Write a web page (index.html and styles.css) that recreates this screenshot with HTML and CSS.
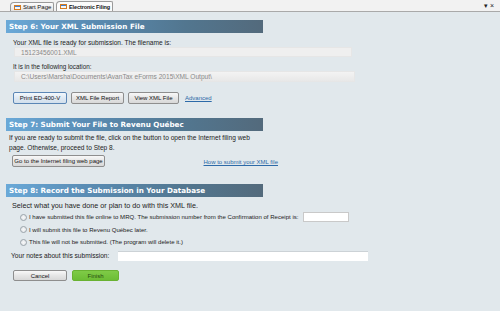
FILE: index.html
```html
<!DOCTYPE html>
<html>
<head>
<meta charset="utf-8">
<link rel="stylesheet" href="styles.css">
</head>
<body>
<div class="tabstrip">
  <div class="tabs">
    <div class="tab inactive"><span class="ticon"></span>Start Page</div>
    <div class="tab active"><span class="ticon"></span>Electronic Filing</div>
  </div>
  <div class="tabctl"><span class="drop">▾</span><span class="close">×</span></div>
</div>
<div class="content">
  <div class="section s6">
    <div class="hdr">Step 6: Your XML Submission File</div>
    <div class="txt t1">Your XML file is ready for submission. The filename is:</div>
    <div class="field f1">15123456001.XML</div>
    <div class="txt t2">It is in the following location:</div>
    <div class="field f2">C:\Users\Marsha\Documents\AvanTax eForms 2015\XML Output\</div>
    <div class="btnrow r1">
      <button class="btn def">Print ED-400-V</button>
      <button class="btn">XML File Report</button>
      <button class="btn">View XML File</button>
      <a class="link">Advanced</a>
    </div>
  </div>
  <div class="section s7">
    <div class="hdr">Step 7: Submit Your File to Revenu Québec</div>
    <div class="txt para">If you are ready to submit the file, click on the button to open the Internet filing web page. Otherwise, proceed to Step 8.</div>
    <div class="btnrow r2">
      <button class="btn wide">Go to the Internet filing web page</button>
      <a class="link howto">How to submit your XML file</a>
    </div>
  </div>
  <div class="section s8">
    <div class="hdr">Step 8: Record the Submission in Your Database</div>
    <div class="txt t3">Select what you have done or plan to do with this XML file.</div>
    <div class="radios">
      <div class="radio rr1"><span class="rb"></span>I have submitted this file online to MRQ. The submission number from the Confirmation of Receipt is:<span class="numbox"></span></div>
      <div class="radio"><span class="rb"></span>I will submit this file to Revenu Québec later.</div>
      <div class="radio"><span class="rb"></span>This file will not be submitted. (The program will delete it.)</div>
    </div>
    <div class="notes"><span>Your notes about this submission:</span><span class="notebox"></span></div>
    <div class="btnrow r3">
      <button class="btn">Cancel</button>
      <button class="btn finish">Finish</button>
    </div>
  </div>
</div>
</body>
</html>
```
FILE: styles.css
```css
html, body { margin: 0; padding: 0; }
body {
  width: 500px; height: 311px; overflow: hidden;
  background: #e1e8ec;
  font-family: "Liberation Sans", Arial, sans-serif;
  font-size: 6.6px; color: #222;
}
.tabstrip {
  height: 11px; background: #f2f2f2; border-bottom: 1px solid #a9a9a9;
  display: flex; justify-content: space-between; align-items: flex-end;
  padding-left: 10px; padding-right: 6px;
}
.tabs { display: flex; align-items: flex-end; gap: 2px; }
.tab {
  height: 9px; display: flex; align-items: center; gap: 2px; white-space: nowrap;
  padding: 0 0 0 3px; font-size: 6px; color: #111; box-sizing: border-box;
  border: 1px solid #9a9a9a; border-bottom: none; overflow: hidden;
  border-radius: 4px 2px 0 0;
}
.tab.inactive { background: linear-gradient(#fdfdfd, #e2e2e2); width: 44px; }
.tab.active { background: #fbfbfb; height: 10px; font-weight: bold; width: 57px; font-size: 5.5px; letter-spacing: -0.1px; }
.ticon {
  width: 7px; height: 5px; display: inline-block; flex: none;
  background: linear-gradient(#3f7fd0 0 35%, #f6f6f6 35% 100%);
  border: 1px solid #d57a1f; box-sizing: border-box;
}
.tabctl { font-size: 7px; color: #222; display: flex; gap: 2px; line-height: 8px; padding-bottom: 1px; }
.content { padding: 8px 0 0 6px; }
.hdr {
  width: 257px; height: 13px; box-sizing: border-box;
  background: linear-gradient(90deg, #6aa9d8 0%, #5a8db5 30%, #52768f 70%, #536a7c 100%);
  color: #fff; font-family: "DejaVu Sans", Verdana, sans-serif; font-weight: bold;
  font-size: 7.2px; line-height: 13px; padding-left: 3px;
}
.txt { padding-left: 7px; line-height: 9px; }
.t1 { margin-top: 5px; }
.field {
  margin-left: 8px; box-sizing: border-box; background: #efefef;
  border: 1px solid #e6e6e6; color: #8a8a8a; padding-left: 6px;
  line-height: 9px; height: 10px;
}
.f1 { width: 338px; }
.t2 { margin-top: 5px; font-size: 6.3px; }
.f2 { width: 341px; height: 11px; line-height: 10px; background: linear-gradient(#f3f3f3, #e8e8e8); }
.btnrow { display: flex; align-items: center; }
.r1 { margin: 10px 0 0 7px; gap: 4px; }
.btn {
  font-family: inherit; font-size: 6px; color: #111;
  height: 12px; padding: 0; margin: 0;
  border: 1px solid #8e8e8e; border-radius: 2px;
  background: linear-gradient(#f8f8f8, #e6e6e6 50%, #d8d8d8);
  width: 54px;
}
.btn.def { border-color: #5b86b5; background: linear-gradient(#f3f8fc, #dfe9f3 50%, #d2dfec); }
.r1 .btn:nth-child(2) { width: 53px; }
.r1 .btn:nth-child(3) { width: 51px; }
.link { color: #2d6aa8; text-decoration: underline; font-size: 6px; margin-left: 2px; }
.s7 { margin-top: 14px; }
.para { width: 255px; margin-top: 2px; line-height: 10px; padding-left: 3px; }
.r2 { margin: 2px 0 0 6px; justify-content: space-between; width: 266px; align-items: flex-start; }
.btn.wide { width: 93px; }
.howto { margin-top: 4px; }
.s8 { margin-top: 17px; }
.t3 { margin-top: 4px; font-size: 7.2px; padding-left: 6px; }
.radios { margin-top: 2px; padding-left: 14px; display: flex; flex-direction: column; gap: 2.5px; font-size: 6.05px; }
.radio { display: flex; align-items: center; height: 10px; }
.rb {
  width: 5px; height: 5px; border-radius: 50%; border: 1px solid #9aa3aa;
  background: radial-gradient(#f8f8f8, #dde2e6); margin-right: 2px; display: inline-block;
}
.numbox { width: 46px; height: 10px; box-sizing: border-box; background: #fff; border: 1px solid #c9c9c9; margin-left: 5px; display: inline-block; }
.notes { display: flex; align-items: center; padding-left: 5px; margin-top: 3px; height: 11px; }
.notebox { width: 250px; height: 10px; background: #fff; margin-left: 9px; display: inline-block; border-top: 1px solid #ccd2d6; box-sizing: border-box; }
.r3 { margin: 9px 0 0 7px; gap: 5px; }
.r3 .btn { height: 11px; }
.btn.finish { width: 47px; border-color: #69b232; background: linear-gradient(#7fcb47, #6cbd35); color: #2a4a10; }
```
